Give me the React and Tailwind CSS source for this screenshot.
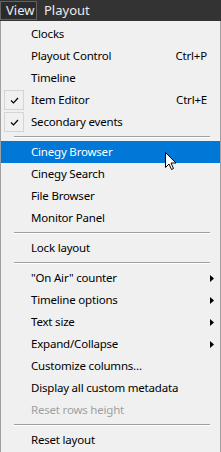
import React from "react";

const items = [
  { label: "Clocks" },
  { label: "Playout Control", shortcut: "Ctrl+P" },
  { label: "Timeline" },
  { label: "Item Editor", shortcut: "Ctrl+E", checked: true },
  { label: "Secondary events", checked: true },
  { sep: true },
  { label: "Cinegy Browser", active: true },
  { label: "Cinegy Search" },
  { label: "File Browser" },
  { label: "Monitor Panel" },
  { sep: true },
  { label: "Lock layout" },
  { sep: true },
  { label: '"On Air" counter', sub: true },
  { label: "Timeline options", sub: true },
  { label: "Text size", sub: true },
  { label: "Expand/Collapse", sub: true },
  { label: "Customize columns..." },
  { label: "Display all custom metadata" },
  { label: "Reset rows height", disabled: true },
  { sep: true },
  { label: "Reset layout" },
];

const Check = () => (
  <div className="absolute left-[3px] top-[1px] w-[20px] h-[20px] border border-[#d4d4d4] flex items-center justify-center">
    <svg width="9" height="7" viewBox="0 0 9 7">
      <path d="M1 3.5 L3.5 6 L8 1" fill="none" stroke="#000" strokeWidth="1.2" />
    </svg>
  </div>
);

const Arrow = () => (
  <svg width="4" height="7" viewBox="0 0 4 7" className="absolute right-[6px] top-[8px]">
    <path d="M0 0 L4 3.5 L0 7 Z" fill="#000" />
  </svg>
);

const Cursor = () => (
  <svg
    width="13"
    height="19"
    viewBox="0 0 13 19"
    className="absolute left-[165px] top-[152px]"
  >
    <path
      d="M0.5 0.5 L0.5 15.5 L4 12 L6.5 17.5 L8.5 16.5 L6 11 L11 11 Z"
      fill="#fff"
      stroke="#000"
      strokeWidth="1"
      strokeLinejoin="miter"
    />
  </svg>
);

const MenuRow = ({ item }) => {
  if (item.sep) {
    return (
      <div className="h-[8px] flex items-center pl-[13px] pr-[10px]">
        <div className="w-full border-t border-[#a0a0a0] border-b border-b-white" />
      </div>
    );
  }
  return (
    <div
      className={
        "relative h-[22px] flex items-center pl-[30px] pr-[13px] " +
        (item.active ? "bg-[#0078d7] text-white " : "") +
        (item.disabled ? "text-[#a0a0a0]" : "")
      }
    >
      {item.checked && <Check />}
      <span className="flex-1 whitespace-nowrap">{item.label}</span>
      {item.shortcut && <span className="whitespace-nowrap">{item.shortcut}</span>}
      {item.sub && <Arrow />}
    </div>
  );
};

export default function App() {
  return (
    <div
      className="relative w-[221px] h-[452px] bg-[#f0f0f0] text-[11.5px] tracking-[-0.2px] text-black overflow-hidden"
      style={{ fontFamily: '"Noto Sans", "Open Sans", sans-serif' }}
    >
      {/* menubar */}
      <div className="h-[21px] bg-[#333333] flex items-center text-[#ececec] text-[13px] tracking-normal">
        <div className="h-[19px] w-[37px] border border-[#626262] bg-[#2b2b2b] flex items-center pl-[5px]">
          View
        </div>
        <div className="pl-[7px]">Playout</div>
      </div>

      {/* dropdown */}
      <div className="h-[431px] border-l border-r border-[#a0a0a0] pt-[2px] flex flex-col">
        {items.map((it, i) => (
          <MenuRow key={i} item={it} />
        ))}
      </div>

      <Cursor />
    </div>
  );
}
